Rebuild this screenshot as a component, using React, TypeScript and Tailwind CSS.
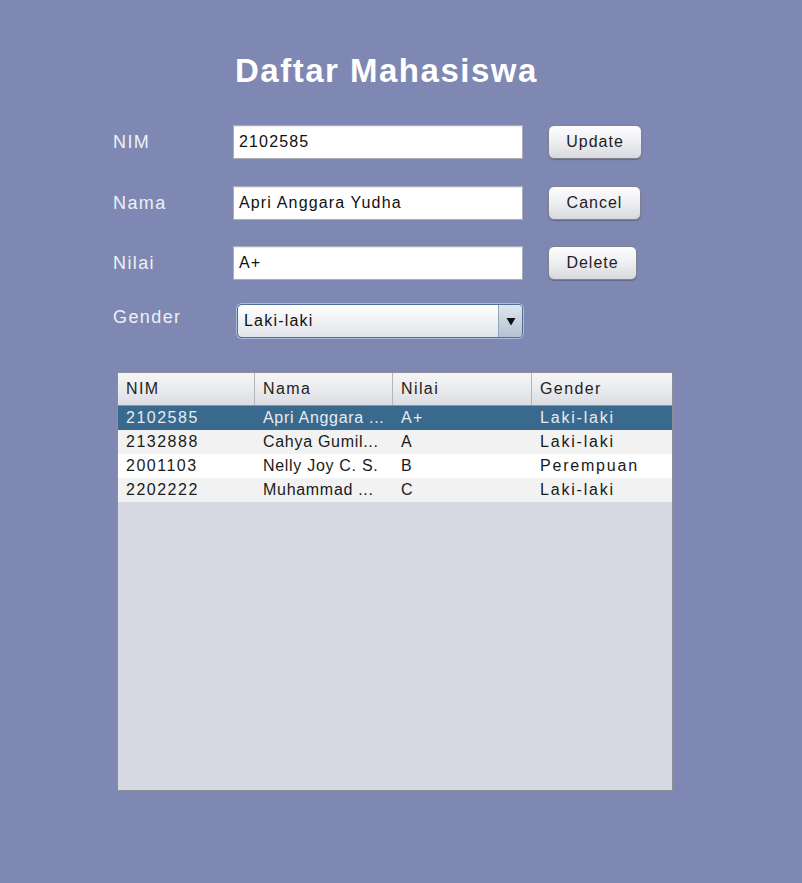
import React from "react";

const rows = [
  { nim: "2102585", nama: "Apri Anggara ...", nilai: "A+", gender: "Laki-laki", sel: true },
  { nim: "2132888", nama: "Cahya Gumil...", nilai: "A", gender: "Laki-laki" },
  { nim: "2001103", nama: "Nelly Joy C. S.", nilai: "B", gender: "Perempuan" },
  { nim: "2202222", nama: "Muhammad ...", nilai: "C", gender: "Laki-laki" },
];

function Field({ value }: { value: string }) {
  return (
    <div className="w-[290px] h-[34px] bg-white border border-[#a9acb9] shadow-[inset_0_1px_1px_rgba(0,0,0,0.08)] flex items-center pl-[5px] text-[16px] tracking-[1.15px] text-[#111]">
      {value}
    </div>
  );
}

function Btn({ label, w }: { label: string; w: string }) {
  return (
    <div
      className={`${w} h-[34px] rounded-[6px] border border-[#80838f] bg-gradient-to-b from-[#fdfdfe] via-[#eeeff2] to-[#d8d9de] shadow-[0_1px_1px_rgba(40,45,70,0.35)] flex items-center justify-center text-[16px] tracking-[1px] text-[#1e1e1e]`}
    >
      {label}
    </div>
  );
}

export default function App() {
  const cell = "flex items-center pl-[8px]";
  return (
    <div className="w-[802px] h-[883px] bg-[#7f88b2] font-['Liberation_Sans',Arial,sans-serif] overflow-hidden">
      <div className="pt-[51px] pl-[235px] h-[91px] text-[33px] leading-[40px] font-bold tracking-[1.5px] text-white">
        Daftar Mahasiswa
      </div>

      <div className="pl-[113px] mt-[34px] flex flex-col">
        <div className="flex items-center h-[34px]">
          <div className="w-[120px] text-[18px] tracking-[1.4px] text-[#eef0f6]">NIM</div>
          <Field value="2102585" />
          <div className="ml-[25px]">
            <Btn label="Update" w="w-[94px]" />
          </div>
        </div>
        <div className="flex items-center h-[34px] mt-[27px]">
          <div className="w-[120px] text-[18px] tracking-[1.4px] text-[#eef0f6]">Nama</div>
          <Field value="Apri Anggara Yudha" />
          <div className="ml-[25px]">
            <Btn label="Cancel" w="w-[93px]" />
          </div>
        </div>
        <div className="flex items-center h-[34px] mt-[26px]">
          <div className="w-[120px] text-[18px] tracking-[1.4px] text-[#eef0f6]">Nilai</div>
          <Field value="A+" />
          <div className="ml-[25px]">
            <Btn label="Delete" w="w-[89px]" />
          </div>
        </div>
        <div className="flex items-center h-[34px] mt-[24px]">
          <div className="w-[124px] text-[18px] tracking-[1.4px] text-[#eef0f6] mb-[8px]">Gender</div>
          <div className="w-[286px] h-[34px] rounded-[5px] border border-[#4f6f98] shadow-[0_0_0_1px_#a9bedc] bg-gradient-to-b from-[#ffffff] to-[#e2e4ea] flex items-stretch overflow-hidden">
            <div className="flex-1 flex items-center pl-[6px] text-[16px] tracking-[1.2px] text-[#111]">Laki-laki</div>
            <div className="w-[24px] border-l border-[#8ea4bf] bg-gradient-to-b from-[#dfe6ee] to-[#b3c2d3] flex items-center justify-center">
              <svg width="10" height="9" viewBox="0 0 10 9">
                <path d="M0.5 1 L9.5 1 L5 8.5 Z" fill="#111" />
              </svg>
            </div>
          </div>
        </div>
      </div>

      <div className="ml-[117px] mt-[34px] w-[556px] h-[419px] border border-[#8c8e98] bg-[#d6d9e2] flex flex-col text-[16px] tracking-[1.4px]">
        <div className="h-[33px] border-b border-[#8f929c] bg-gradient-to-b from-[#f6f6f8] via-[#eaebee] to-[#dcdde3] grid grid-cols-[137px_138px_139px_1fr] text-[#222]">
          <div className={`${cell} border-r border-[#b3b5bd]`}>NIM</div>
          <div className={`${cell} border-r border-[#b3b5bd]`}>Nama</div>
          <div className={`${cell} border-r border-[#b3b5bd]`}>Nilai</div>
          <div className={cell}>Gender</div>
        </div>
        {rows.map((r, i) => (
          <div
            key={r.nim}
            className={`h-[24px] grid grid-cols-[137px_138px_139px_1fr] ${
              r.sel ? "bg-[#39698d] text-[#e4ecf4]" : i % 2 === 1 ? "bg-[#f2f2f2] text-[#1a1a1a]" : "bg-white text-[#1a1a1a]"
            }`}
          >
            <div className={`${cell} tracking-[1.5px]`}>{r.nim}</div>
            <div className={`${cell} tracking-[0.7px]`}>{r.nama}</div>
            <div className={`${cell} tracking-[1.4px]`}>{r.nilai}</div>
            <div className={`${cell} tracking-[1.8px]`}>{r.gender}</div>
          </div>
        ))}
      </div>
    </div>
  );
}
